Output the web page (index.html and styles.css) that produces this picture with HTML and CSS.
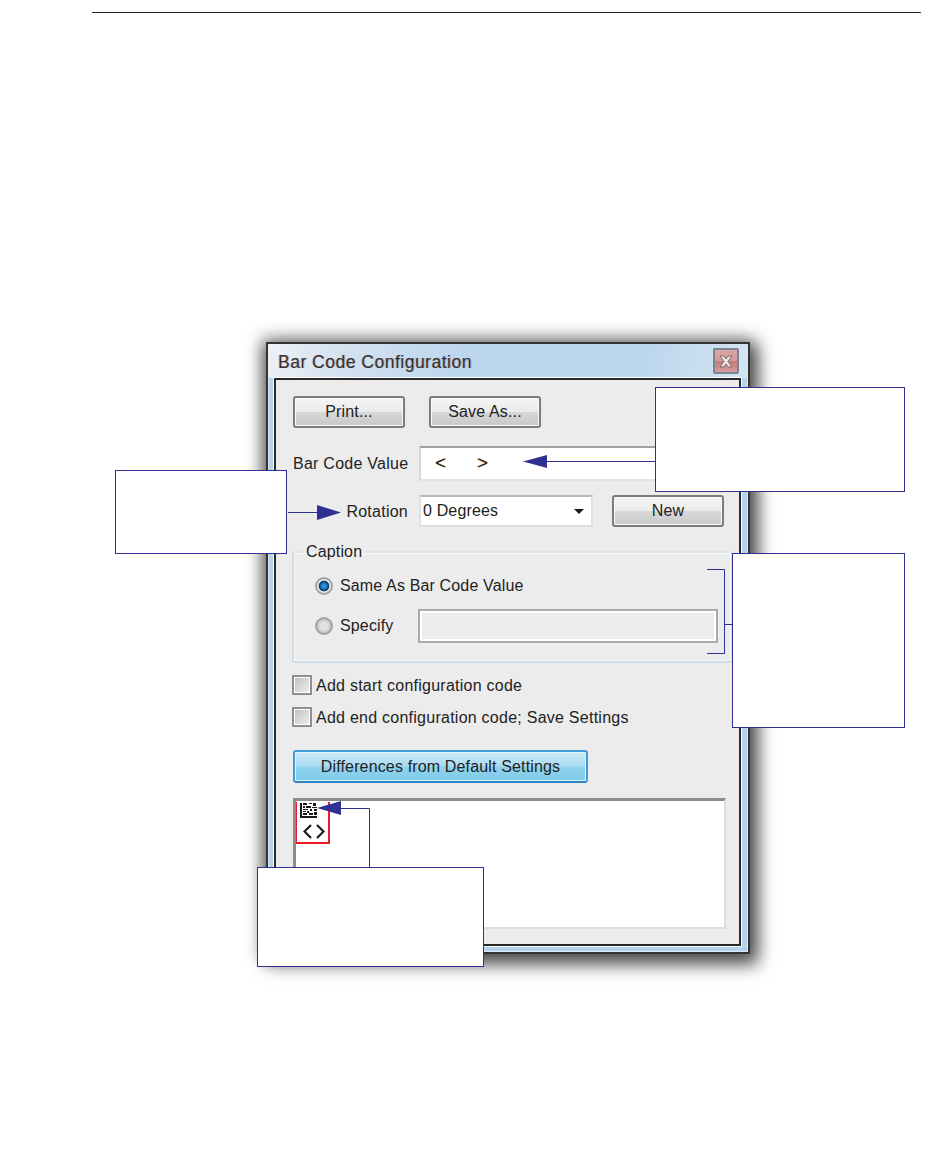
FILE: index.html
```html
<!DOCTYPE html>
<html lang="en">
<head>
<meta charset="utf-8">
<title>Bar Code Configuration</title>
<link rel="stylesheet" href="styles.css">
</head>
<body>
<div class="page">
  <div class="rule"></div>
  <div class="figure">
    <div class="window">
      <div class="titlebar">
        <span class="title">Bar Code Configuration</span>
        <span class="close">
          <svg width="16" height="13" viewBox="0 0 16 13"><path d="M2 1h4l2 3 2-3h4l-4 5.500 4 5.500h-4l-2-3-2 3H2l4-5.500z" fill="#f3e4e4" stroke="#7d6a6e"/></svg>
        </span>
      </div>
      <div class="client">
        <div class="row-buttons">
          <div class="btn">Print...</div>
          <div class="btn">Save As...</div>
        </div>
        <div class="row-value">
          <span class="label">Bar Code Value</span>
          <div class="input value-input"><span class="lt">&lt;</span><span class="gt">&gt;</span></div>
        </div>
        <div class="row-rotation">
          <span class="label">Rotation</span>
          <div class="select"><span>0 Degrees</span><i class="caret"></i></div>
          <div class="btn">New</div>
        </div>
        <fieldset class="group">
          <legend>Caption</legend>
          <div class="radio-row first"><i class="radio on"></i><span>Same As Bar Code Value</span></div>
          <div class="radio-row"><i class="radio"></i><span class="specify">Specify</span><div class="disabled-input"></div></div>
        </fieldset>
        <div class="check-row first"><i class="check"></i><span>Add start configuration code</span></div>
        <div class="check-row"><i class="check"></i><span>Add end configuration code; Save Settings</span></div>
        <div class="btn-blue">Differences from Default Settings</div>
        <div class="list">
          <div class="thumb">
            <svg class="matrix" width="17" height="15" viewBox="0 0 17 15">
              <path d="M0 0h2v15H0zM2 13h15v2H2z" fill="#1a1a1a"/>
              <path d="M3 0h4v2H3zM9 0h3v1H9zM13 0h3v3h-3zM3 3h2v2H3zM6 3h5v2H6zM12 4h5v1h-5zM3 6h5v1H3zM10 6h2v2h-2zM14 6h3v2h-3zM3 8h3v1H3zM7 8h2v2H7zM3 10h4v2H3zM9 10h4v2H9zM14 9h3v3h-3z" fill="#1a1a1a"/>
            </svg>
            <svg class="brackets" width="22" height="15" viewBox="0 0 22 15">
              <path d="M8 1 1.500 7.500 8 14M14 1l6.500 6.500L14 14" fill="none" stroke="#1a1a1a" stroke-width="2.200"/>
            </svg>
          </div>
        </div>
      </div>
    </div>

    <svg class="leaders" width="950" height="1000" viewBox="0 0 950 1000">
      <g fill="none" stroke="#2e3192" stroke-width="1">
        <path d="M655 131.500H545"/>
        <path d="M288 182.500H318"/>
        <path d="M707 239.500H724.500V323.500H707M724.500 294.500H732"/>
        <path d="M369.500 537V478.500H340"/>
      </g>
      <g fill="#2e3192">
        <path d="M523 131.500 547 125V138z"/>
        <path d="M341 182.500 317 175V190z"/>
        <path d="M317 478 341 471V485z"/>
      </g>
    </svg>
    <div class="callout c-top"></div>
    <div class="callout c-left"></div>
    <div class="callout c-right"></div>
    <div class="callout c-bottom"></div>
  </div>
</div>
</body>
</html>
```
FILE: styles.css
```css
* { box-sizing: border-box; }
html, body { margin: 0; background: #fff; }
body { font-family: "Liberation Sans", Arial, sans-serif; color: #222; }
.page { width: 950px; height: 1171px; padding-top: 12px; overflow: hidden; }
.rule { margin-left: 92px; width: 829px; height: 1px; background: #222; }

.figure { position: relative; margin-top: 317px; height: 660px; padding: 12px 0 0 266px; }
.leaders { position: absolute; left: 0; top: 0; }
.callout { position: absolute; background: #fff; border: 1px solid #2e3192; }
.c-top { left: 655px; top: 57px; width: 250px; height: 105px; }
.c-left { left: 115px; top: 140px; width: 172px; height: 84px; }
.c-right { left: 732px; top: 223px; width: 173px; height: 175px; }
.c-bottom { left: 257px; top: 537px; width: 227px; height: 100px; }

.window {
  width: 484px; height: 612px;
  border: 2px solid #333;
  background: #b6d3ee;
  box-shadow: inset 0 0 0 1px #dfe9f3, 4px 7px 16px 4px rgba(0,0,0,.55), 0 0 16px 4px rgba(0,0,0,.4);
  display: flex; flex-direction: column;
}
.titlebar {
  height: 34px; flex: none;
  display: flex; align-items: center; justify-content: space-between;
  padding: 2px 9px 0 10px;
  background: linear-gradient(100deg, #eef1f6 0%, #d6e3f0 14%, #bcd6ee 40%, #bcd6ee 78%, #d5e5f2 100%);
}
.title { font-size: 17.5px; letter-spacing: .5px; white-space: nowrap; color: #3a2d2a; text-shadow: 1px 0 0 rgba(60,90,150,.3), -1px 0 0 rgba(190,110,40,.2); }
.close {
  width: 26px; height: 26px; border: 2px solid #7b8492; border-radius: 2px; margin-bottom: 2px;
  background: linear-gradient(#dba6a6 0%, #d39a9a 50%, #c57b7b 52%, #d69c9c 100%);
  display: flex; align-items: center; justify-content: center;
}
.client {
  flex: 1; margin: 0 7px 6px 6px;
  border: 2px solid #2a2a2a;
  outline: 1px solid #fff;
  background: #ececec;
  padding: 16px 0 0 17px;
  position: relative;
}
.label, .radio-row span, .check-row span, .select span, legend, .btn, .btn-blue {
  font-size: 16px; letter-spacing: .15px; color: #222; white-space: nowrap;
}
.check-row span { letter-spacing: .25px; padding-top: 2px; }
.btn {
  width: 112px; height: 32px; flex: none;
  border: 2px solid #7c7c7c; border-radius: 3px;
  background: linear-gradient(#f4f4f4 0%, #ebebeb 48%, #d7d7d7 52%, #c8c8c8 100%);
  box-shadow: inset 0 0 0 1px #fafafa;
  display: flex; align-items: center; justify-content: center;
}
.row-buttons { display: flex; gap: 24px; }
.row-value, .row-rotation { display: flex; align-items: center; }
.row-value { margin-top: 18px; height: 35px; }
.row-rotation { margin-top: 14px; height: 32px; }
.label { width: 115px; text-align: right; flex: none; margin-right: 11px; letter-spacing: .25px; padding-top: 1px; }
.input {
  flex: 1; height: 35px;
  background: #fff; border-top: 2px solid #a0a0a0; border-left: 2px solid #d4d8dc; border-bottom: 2px solid #dde3e8;
  display: flex; align-items: center; padding-left: 14px; gap: 32px;
  font-size: 18px;
}
.lt { color: #222; text-shadow: 1px 0 0 #c9781f; }
.gt { color: #222; text-shadow: -1px 0 0 #c9781f; }
.select {
  width: 174px; height: 32px; flex: none; margin-right: 19px;
  background: #fff; border: 2px solid #dde1e5; border-top-color: #b8b8b8;
  display: flex; align-items: center; justify-content: space-between; padding: 0 7px 0 2px;
}
.caret { width: 0; height: 0; border: 5px solid transparent; border-top-color: #1a1a1a; border-bottom-width: 0; }

.group {
  margin: 17px 0 0 -1px; padding: 0;
  width: 441px; height: 119px;
  border: 2px solid #d0dbe3; border-top-color: #dfe6eb; border-radius: 3px;
  box-shadow: inset 0 0 0 1px #f8f8f8;
  min-width: 0;
}
legend { padding: 0 3px; margin-left: 9px; line-height: 16px; height: 16px; }
.radio-row { display: flex; align-items: center; height: 34px; padding-left: 21px; }
.radio-row.first { margin-top: 9px; margin-bottom: 6px; }
.radio-row span { margin-left: 7px; }
.specify { width: 78px; flex: none; }
.radio {
  width: 18px; height: 18px; border-radius: 50%; flex: none; border: 2px solid #a4a4a4;
  background: radial-gradient(circle, #e2e2e2 0 35%, #bfbfbf 75%, #f2f2f2 80%);
}
.radio.on { background: radial-gradient(circle, #2a8fd0 0 22%, #0d4f86 40%, #0b4272 50%, #e8e8e8 58%, #d0d0d0 100%); }
.disabled-input {
  width: 300px; height: 34px; flex: none;
  border: 2px solid #ababab; box-shadow: inset 0 0 0 2px #fff; background: #ececec;
}
.check-row { display: flex; align-items: center; gap: 4px; margin-left: -1px; height: 20px; }
.check-row.first { margin-top: 12px; margin-bottom: 12px; }
.check {
  width: 20px; height: 20px; flex: none; border: 2px solid #8f8f8f; box-shadow: inset 0 0 0 1px #fff;
  background: linear-gradient(135deg, #bdbdbd, #f1f1f1);
}
.btn-blue {
  margin-top: 23px; width: 295px; height: 33px;
  border: 2px solid #3f9ad6; border-bottom-color: #2f86c2; border-radius: 3px;
  background: linear-gradient(#cbe8f6 0%, #aadcf2 48%, #8fd2ed 52%, #7fcbea 100%);
  box-shadow: inset 0 0 0 1px #e2f4fb;
  display: flex; align-items: center; justify-content: center;
}
.list {
  margin-top: 15px; width: 433px; height: 131px;
  background: #fff;
  border-top: 3px solid #8c8c8c; border-left: 3px solid #8c8c8c;
  border-right: 2px solid #ddd; border-bottom: 2px solid #ddd;
}
.thumb {
  width: 34px; height: 42px; margin-top: 1px;
  border: 2px solid #ed1c24; border-width: 0 2px 2px 1px;
  display: flex; flex-direction: column; align-items: flex-start;
}
.matrix { margin: 1px 0 0 3px; }
.brackets { margin: 6px 0 0 6px; }
```
